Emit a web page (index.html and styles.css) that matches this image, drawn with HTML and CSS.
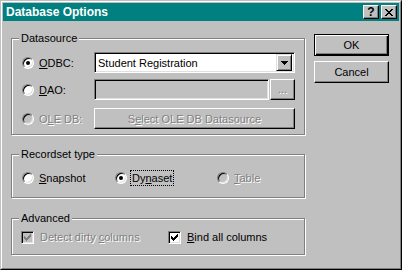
FILE: index.html
```html
<html>
  <head>
    <title>Database Options</title>
    <link rel="stylesheet" href="styles.css">
  </head>
  <body>
    <div class="window">
      <div class="frame">
        <div class="titlebar">
          <span class="title">Database Options</span>
          <span class="tbtn help">?</span>
          <span class="tbtn close">
            <svg width="8" height="7" viewBox="0 0 8 7"><path d="M0 0h2v1h-2zM6 0h2v1h-2zM1 1h2v1h-2zM5 1h2v1h-2zM2 2h4v1h-4zM3 3h2v1h-2zM2 4h4v1h-4zM1 5h2v1h-2zM5 5h2v1h-2zM0 6h2v1h-2zM6 6h2v1h-2z" fill="#000"/></svg>
          </span>
        </div>

        <div class="content">
          <div class="groups">
            <div class="group datasource">
              <span class="legend">Datasource</span>
              <div class="ds-row first">
                <div class="option"><span class="radio checked"></span><span class="label"><u>O</u>DBC:</span></div>
                <div class="combo">
                  <span class="combo-text">Student Registration</span>
                  <span class="drop">
                    <svg width="7" height="4" viewBox="0 0 7 4"><path d="M0 0h7v1h-7zM1 1h5v1h-5zM2 2h3v1h-3zM3 3h1v1h-1z" fill="#000"/></svg>
                  </span>
                </div>
              </div>
              <div class="ds-row second">
                <div class="option"><span class="radio"></span><span class="label"><u>D</u>AO:</span></div>
                <div class="browse">
                  <span class="field"></span>
                  <span class="btn dots disabled">...</span>
                </div>
              </div>
              <div class="ds-row third">
                <div class="option"><span class="radio off"></span><span class="label disabled">O<u>L</u>E DB:</span></div>
                <span class="btn wide disabled">S<u>e</u>lect OLE DB Datasource</span>
              </div>
            </div>

            <div class="group recordset">
              <span class="legend">Recordset type</span>
              <div class="choices">
                <div class="option"><span class="radio"></span><span class="label"><u>S</u>napshot</span></div>
                <div class="option"><span class="radio checked"></span><span class="label focus">Dy<u>n</u>aset</span></div>
                <div class="option"><span class="radio off"></span><span class="label disabled"><u>T</u>able</span></div>
              </div>
            </div>

            <div class="group advanced">
              <span class="legend">Advanced</span>
              <div class="checks">
                <div class="option"><span class="check off"><svg width="7" height="7" viewBox="0 0 7 7"><path d="M6 0h1v1h-1zM5 1h2v1h-2zM0 2h1v1h-1zM4 2h3v1h-3zM0 3h2v1h-2zM3 3h3v1h-3zM0 4h5v1h-5zM1 5h3v1h-3zM2 6h1v1h-1z"/></svg></span><span class="label disabled">Detect dirty <u>c</u>olumns</span></div>
                <div class="option"><span class="check"><svg width="7" height="7" viewBox="0 0 7 7"><path d="M6 0h1v1h-1zM5 1h2v1h-2zM0 2h1v1h-1zM4 2h3v1h-3zM0 3h2v1h-2zM3 3h3v1h-3zM0 4h5v1h-5zM1 5h3v1h-3zM2 6h1v1h-1z"/></svg></span><span class="label"><u>B</u>ind all columns</span></div>
              </div>
            </div>
          </div>

          <div class="buttons">
            <span class="btn default">OK</span>
            <span class="btn">Cancel</span>
          </div>
        </div>
      </div>
    </div>
  </body>
</html>
```

FILE: styles.css
```css
body { margin: 0; font: normal 11px "Liberation Sans", Arial, sans-serif; color: #000; }
u { text-underline-offset: 1px; }

.window { width: 402px; height: 270px; box-sizing: border-box; background: #c0c0c0; border: 1px solid; border-color: #c0c0c0 #000 #000 #c0c0c0; }
.frame { height: 100%; box-sizing: border-box; border: 1px solid; border-color: #fff #808080 #808080 #fff; padding: 1px; }

.titlebar { height: 18px; background: #008080; display: flex; align-items: center; padding: 0 2px 0 3px; }
.title { flex: 1; color: #fff; font-weight: bold; font-size: 12px; }
.tbtn { width: 16px; height: 14px; box-sizing: border-box; background: #c0c0c0; border: 1px solid; border-color: #fff #000 #000 #fff; box-shadow: inset -1px -1px #808080; display: flex; align-items: center; justify-content: center; }
.help { font-weight: bold; font-size: 12px; line-height: 12px; }
.close { margin-left: 2px; }

.content { display: flex; padding: 13px 10px 0 8px; }
.groups { width: 294px; margin-top: 4px; }
.buttons { margin-left: 9px; display: flex; flex-direction: column; gap: 5px; }

.group { position: relative; box-sizing: border-box; border: 1px solid #808080; box-shadow: 1px 1px 0 #fff, inset 1px 1px 0 #fff; }
.legend { position: absolute; top: -7px; left: 7px; padding: 0 2px; line-height: 13px; background: #c0c0c0; }
.datasource { height: 97px; padding: 13px 8px 0 10px; }
.recordset { height: 44px; margin-top: 19px; padding: 15px 0 0 10px; }
.advanced { height: 37px; margin-top: 20px; padding: 11px 0 0 9px; }

.ds-row { display: flex; height: 21px; align-items: center; }
.ds-row.second { margin-top: 6px; }
.ds-row.third { margin-top: 8px; }
.ds-row .option { width: 72px; }

.option { display: flex; align-items: center; }
.label { margin-left: 4px; padding: 0 1px; line-height: 14px; }
.disabled { color: #808080; text-shadow: 1px 1px 0 #fff; }
.focus { outline: 1px dotted #000; outline-offset: 0; }

.radio { position: relative; width: 12px; height: 12px; box-sizing: border-box; border-radius: 50%; background: #fff; border: 1px solid; border-color: #808080 #fff #fff #808080; box-shadow: inset 1px 1px #000, inset -1px -1px #dfdfdf; }
.radio.off { background: #c0c0c0; }
.radio.checked::after { content: ""; position: absolute; left: 3px; top: 3px; width: 4px; height: 4px; border-radius: 50%; background: #000; }

.check { width: 13px; height: 13px; box-sizing: border-box; background: #fff; border: 1px solid; border-color: #808080 #fff #fff #808080; box-shadow: inset 1px 1px #000, inset -1px -1px #dfdfdf; display: flex; align-items: center; justify-content: center; }
.check svg { fill: #000; }
.check.off { background: #c0c0c0; }
.check.off svg { fill: #808080; }
.check + .label { margin-left: 5px; }
.checks { display: grid; grid-template-columns: 147px 1fr; }
.choices { display: grid; grid-template-columns: 93px 102px 1fr; height: 16px; align-items: center; }

.combo { width: 201px; height: 21px; box-sizing: border-box; background: #fff; border: 1px solid; border-color: #808080 #fff #fff #808080; box-shadow: inset 1px 1px #000, inset -1px -1px #dfdfdf; display: flex; align-items: center; padding: 2px; }
.combo-text { flex: 1; padding-left: 1px; }
.drop { width: 16px; height: 17px; box-sizing: border-box; background: #c0c0c0; border: 1px solid; border-color: #dfdfdf #000 #000 #dfdfdf; box-shadow: inset 1px 1px #fff, inset -1px -1px #808080; display: flex; align-items: center; justify-content: center; }

.browse { width: 201px; display: flex; gap: 1px; height: 21px; }
.field { flex: 1; box-sizing: border-box; background: #c0c0c0; border: 1px solid; border-color: #808080 #fff #fff #808080; box-shadow: inset 1px 1px #000, inset -1px -1px #dfdfdf; }

.btn { box-sizing: border-box; background: #c0c0c0; border: 1px solid; border-color: #fff #000 #000 #fff; box-shadow: inset -1px -1px #808080; display: flex; align-items: center; justify-content: center; width: 75px; height: 22px; }
.btn.dots { width: 25px; height: 21px; padding-bottom: 2px; }
.btn.wide { width: 201px; height: 21px; }
.btn.default { border-color: #000; box-shadow: inset 1px 1px #fff, inset -1px -1px #000, inset -2px -2px #808080; }
```
